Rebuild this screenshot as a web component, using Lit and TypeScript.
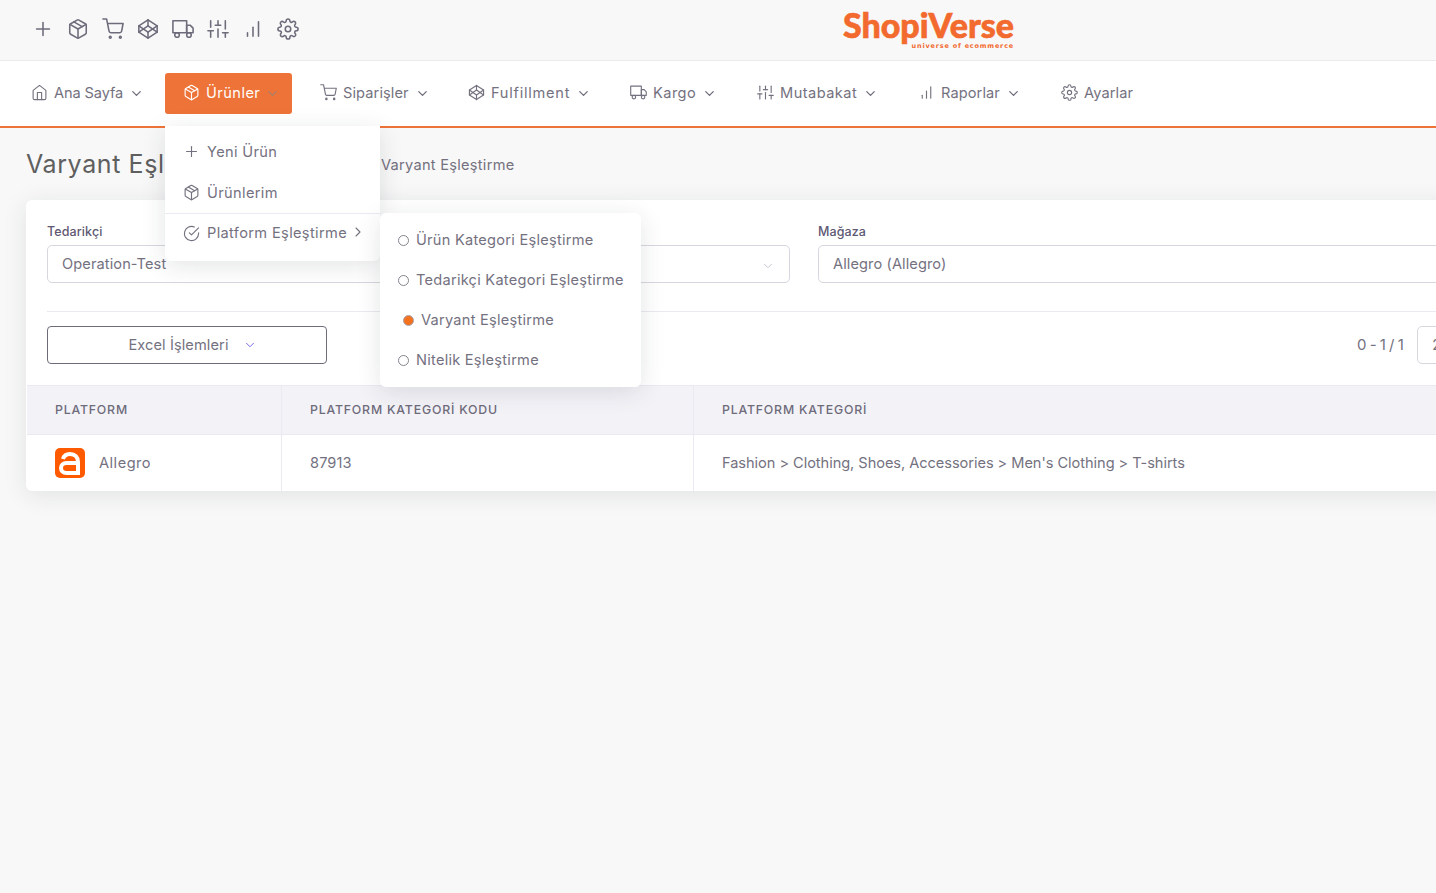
import { LitElement, html, css, svg } from "lit";
import { customElement } from "lit/decorators.js";

const P: Record<string, any> = {
  plus: svg`<line x1="12" y1="5" x2="12" y2="19"/><line x1="5" y1="12" x2="19" y2="12"/>`,
  box: svg`<line x1="16.5" y1="9.4" x2="7.5" y2="4.21"/><path d="M21 16V8a2 2 0 0 0-1-1.73l-7-4a2 2 0 0 0-2 0l-7 4A2 2 0 0 0 3 8v8a2 2 0 0 0 1 1.73l7 4a2 2 0 0 0 2 0l7-4A2 2 0 0 0 21 16z"/><polyline points="3.27 6.96 12 12.01 20.73 6.96"/><line x1="12" y1="22.08" x2="12" y2="12"/>`,
  cart: svg`<circle cx="9" cy="21" r="1"/><circle cx="20" cy="21" r="1"/><path d="M1 1h4l2.68 13.39a2 2 0 0 0 2 1.61h9.72a2 2 0 0 0 2-1.61L23 6H6"/>`,
  codepen: svg`<polygon points="12 2 22 8.5 22 15.5 12 22 2 15.5 2 8.5 12 2"/><line x1="12" y1="22" x2="12" y2="15.5"/><polyline points="22 8.5 12 15.5 2 8.5"/><polyline points="2 15.5 12 8.5 22 15.5"/><line x1="12" y1="2" x2="12" y2="8.5"/>`,
  truck: svg`<rect x="1" y="3" width="15" height="13"/><polygon points="16 8 20 8 23 11 23 16 16 16 16 8"/><circle cx="5.5" cy="18.5" r="2.5"/><circle cx="18.5" cy="18.5" r="2.5"/>`,
  sliders: svg`<line x1="4" y1="21" x2="4" y2="14"/><line x1="4" y1="10" x2="4" y2="3"/><line x1="12" y1="21" x2="12" y2="12"/><line x1="12" y1="8" x2="12" y2="3"/><line x1="20" y1="21" x2="20" y2="16"/><line x1="20" y1="12" x2="20" y2="3"/><line x1="1" y1="14" x2="7" y2="14"/><line x1="9" y1="8" x2="15" y2="8"/><line x1="17" y1="16" x2="23" y2="16"/>`,
  bars: svg`<line x1="12" y1="20" x2="12" y2="10"/><line x1="18" y1="20" x2="18" y2="4"/><line x1="6" y1="20" x2="6" y2="16"/>`,
  gear: svg`<circle cx="12" cy="12" r="3"/><path d="M19.4 15a1.65 1.65 0 0 0 .33 1.82l.06.06a2 2 0 0 1 0 2.83 2 2 0 0 1-2.83 0l-.06-.06a1.65 1.65 0 0 0-1.82-.33 1.65 1.65 0 0 0-1 1.51V21a2 2 0 0 1-2 2 2 2 0 0 1-2-2v-.09A1.65 1.65 0 0 0 9 19.4a1.65 1.65 0 0 0-1.82.33l-.06.06a2 2 0 0 1-2.83 0 2 2 0 0 1 0-2.83l.06-.06a1.65 1.65 0 0 0 .33-1.82 1.65 1.65 0 0 0-1.51-1H3a2 2 0 0 1-2-2 2 2 0 0 1 2-2h.09A1.65 1.65 0 0 0 4.6 9a1.65 1.65 0 0 0-.33-1.82l-.06-.06a2 2 0 0 1 0-2.83 2 2 0 0 1 2.83 0l.06.06a1.65 1.65 0 0 0 1.82.33H9a1.65 1.65 0 0 0 1-1.51V3a2 2 0 0 1 2-2 2 2 0 0 1 2 2v.09a1.65 1.65 0 0 0 1 1.51 1.65 1.65 0 0 0 1.82-.33l.06-.06a2 2 0 0 1 2.83 0 2 2 0 0 1 0 2.83l-.06.06a1.65 1.65 0 0 0-.33 1.82V9a1.65 1.65 0 0 0 1.51 1H21a2 2 0 0 1 2 2 2 2 0 0 1-2 2h-.09a1.65 1.65 0 0 0-1.51 1z"/>`,
  home: svg`<path d="M3 9l9-7 9 7v11a2 2 0 0 1-2 2H5a2 2 0 0 1-2-2z"/><polyline points="9 22 9 12 15 12 15 22"/>`,
  check: svg`<path d="M22 11.08V12a10 10 0 1 1-5.93-9.14"/><polyline points="22 4 12 14.01 9 11.01"/>`,
  down: svg`<polyline points="6 9 12 15 18 9"/>`,
  right: svg`<polyline points="9 18 15 12 9 6"/>`,
};

const icon = (n: string, cls = "") =>
  html`<svg class="ic ${cls}" viewBox="0 0 24 24" fill="none" stroke="currentColor" stroke-width="2" stroke-linecap="round" stroke-linejoin="round">${P[n]}</svg>`;

const NAV = [
  ["home", "Ana Sayfa", true, "tight"],
  ["box", "Ürünler", true, "active wide"],
  ["cart", "Siparişler", true, ""],
  ["codepen", "Fulfillment", true, "wider"],
  ["truck", "Kargo", true, "wide"],
  ["sliders", "Mutabakat", true, "wide"],
  ["bars", "Raporlar", true, ""],
  ["gear", "Ayarlar", false, ""],
] as const;

@customElement("app-root")
export class AppRoot extends LitElement {
  static styles = css`
    :host {
      display: block;
      position: relative;
      width: 100%;
      height: 893px;
      overflow: hidden;
      background: #f8f8f8;
      font-family: Inter, "Liberation Sans", sans-serif;
      font-size: 14px;
      letter-spacing: 0.1px;
      color: #74717f;
    }
    .ic { display: block; flex: none; }
    .top {
      height: 60px;
      display: grid;
      grid-template-columns: 810px auto;
      align-items: center;
      padding-left: 32px;
      border-bottom: 1px solid #ebebeb;
    }
    .quick { display: flex; gap: 13px; margin-top: -2px; color: #6e6b7b; }
    .quick .ic { width: 22px; height: 22px; stroke-width: 1.7; }
    .logo {
      width: 172px;
      margin-top: 0;
      text-align: right;
      color: #f26a2e;
      font-family: Lato, sans-serif;
      line-height: 1;
    }
    .logo b {
      display: block;
      font-size: 34px;
      font-weight: 900;
      letter-spacing: 0;
      line-height: 30px;
      -webkit-text-stroke: 0.6px #f26a2e;
      white-space: nowrap;
    }
    .logo span {
      display: block;
      font-family: "DejaVu Sans", sans-serif;
      font-size: 6.5px;
      font-weight: 700;
      letter-spacing: 0.8px;
      margin-top: 3px;
      white-space: nowrap;
    }
    nav {
      height: 65px;
      background: #fff;
      border-bottom: 2px solid #ee7338;
      display: grid;
      grid-template-columns: 134px 155px 148px 162px 127px 161px 143px auto;
      align-items: center;
      padding-left: 31px;
    }
    .item { display: flex; align-items: center; font-size: 14.6px; padding-bottom: 2px; }
    .item .ic { width: 17px; height: 17px; stroke-width: 1.6; margin-right: 6px; }
    .item .chev { width: 15px; height: 15px; margin: 1px 0 0 6px; stroke-width: 2; color: #6e6b7b; }
    .item.tight { letter-spacing: -0.1px; }
    .item.wide { letter-spacing: 0.45px; }
    .item.wider { letter-spacing: 0.75px; }
    .item.active {
      width: 127px;
      height: 41px;
      box-sizing: border-box;
      padding-left: 18px;
      background: #ee7338;
      color: #fff;
      border-radius: 3px;
    }
    .item.active .chev { color: #a5806d; margin-left: 5px; }
    .head {
      display: grid;
      grid-template-columns: 355px 1fr;
      align-items: center;
      height: 72px;
      padding-left: 26px;
    }
    h1 { margin: 0; font-size: 25px; font-weight: 400; color: #5f5f5f; white-space: nowrap; letter-spacing: 0.6px; }
    .crumb { font-size: 14.6px; letter-spacing: 0.27px; padding-top: 2px; }
    .card {
      margin-left: 26px;
      width: 1500px;
      height: 291px;
      background: #fff;
      border-radius: 6px;
      box-shadow: 0 4px 24px rgba(34, 41, 47, 0.1);
      box-sizing: border-box;
      padding-top: 24px;
      display: flex;
      flex-direction: column;
    }
    .filters {
      display: grid;
      grid-template-columns: 357.5px 357.5px 700px;
      gap: 28px;
      height: 87px;
      border-bottom: 1px solid #ebe9f1;
      margin: 0 0 0 21px;
    }
    label { display: block; height: 21px; line-height: 15px; font-size: 12.5px; font-weight: 500; color: #5e5873; }
    .inp {
      display: flex;
      align-items: center;
      justify-content: space-between;
      height: 38px;
      box-sizing: border-box;
      padding: 0 14px;
      border: 1px solid #d8d6de;
      border-radius: 5px;
      font-size: 14.6px;
    }
    .inp .ic { width: 14px; height: 14px; color: #c4c2cc; stroke-width: 1.6; margin: 3px 0 0 0; }
    .tools {
      display: flex;
      align-items: center;
      margin: 14px 0 0 21px;
      height: 38px;
    }
    .excel {
      display: flex;
      align-items: center;
      justify-content: center;
      gap: 14px;
      width: 280px;
      height: 38px;
      box-sizing: border-box;
      border: 1px solid #6e6b7b;
      border-radius: 4px;
      padding-left: 11px;
      font-size: 14.6px;
    }
    .excel .ic { width: 14px; height: 14px; color: #7367f0; stroke-width: 1.7; }
    .count { margin-left: 1030px; font-size: 15px; letter-spacing: 0.5px; word-spacing: -2px; white-space: nowrap; margin-top: -2px; }
    .size {
      margin-left: 13px;
      width: 60px;
      height: 38px;
      box-sizing: border-box;
      border: 1px solid #d8d6de;
      border-radius: 5px;
      padding: 9px 0 0 14px;
    }
    .table {
      margin: 21px 0 0 1px;
      display: grid;
      grid-template-columns: 254px 412px 1fr;
    }
    .th, .td { display: flex; align-items: center; padding-left: 28px; border-left: 1px solid #ebe9f1; }
    .th:nth-child(3n + 1), .td:nth-child(3n + 1) { border-left: 0; }
    .th {
      height: 48px;
      padding-bottom: 1px;
      box-sizing: border-box;
      height: 50px;
      background: #f3f2f7;
      border-top: 1px solid #ebe9f1;
      border-bottom: 1px solid #ebe9f1;
      font-size: 12.3px;
      font-weight: 500;
      letter-spacing: 0.82px;
      color: #6e6b7b;
    }
    .td { height: 56px; font-size: 14.6px; }
    .td.long { letter-spacing: -0.05px; }
    .td.name { letter-spacing: 0.5px; }
    .allegro { width: 30px; height: 30px; margin-right: 14px; display: block; }
    .menu {
      position: absolute;
      background: #fff;
      border-radius: 6px;
      box-shadow: 0 5px 25px rgba(34, 41, 47, 0.12);
      box-sizing: border-box;
      letter-spacing: 0.25px;
    }
    .m1 { left: 165px; top: 126px; width: 215px; height: 135px; border-radius: 0 0 6px 6px; padding-top: 5px; letter-spacing: 0.35px; }
    .m1 div.row { display: flex; align-items: center; height: 41px; padding-left: 18px; font-size: 14.6px; }
    .m1 .ic { width: 17px; height: 17px; stroke-width: 1.6; margin-right: 7px; }
    .m1 .sep { border-top: 1px solid #ebe9f1; box-sizing: border-box; padding-bottom: 2px; }
    .m1 .row .arrow { width: 16px; height: 16px; margin: -2px 0 0 3px; }
    .m2 { left: 380px; top: 213px; width: 261px; height: 174px; padding-top: 7px; }
    .m2 div.row { display: flex; align-items: center; height: 40px; padding-left: 18px; font-size: 14.6px; }
    .dot { width: 11px; height: 11px; box-sizing: border-box; border: 1.5px solid #85838f; border-radius: 50%; margin-right: 7px; flex: none; }
    .m2 div.on { padding-left: 23px; }
    .on .dot { background: #f4711e; border-color: #a9a7b2; }
  `;

  render() {
    return html`
      <div class="top">
        <div class="quick">
          ${["plus", "box", "cart", "codepen", "truck", "sliders", "bars", "gear"].map((n) => icon(n))}
        </div>
        <div class="logo"><b>ShopiVerse</b><span>universe of ecommerce</span></div>
      </div>
      <nav>
        ${NAV.map(
          ([i, t, c, k]) => html`<div class="item ${k}">
            ${icon(i)}<span>${t}</span>${c ? icon("down", "chev") : ""}
          </div>`
        )}
      </nav>
      <div class="head"><h1>Varyant Eşleştirme</h1><div class="crumb">Varyant Eşleştirme</div></div>
      <div class="card">
        <div class="filters">
          <div><label>Tedarikçi</label><div class="inp">Operation-Test</div></div>
          <div><label>Platform</label><div class="inp"><span>Allegro</span>${icon("down")}</div></div>
          <div><label>Mağaza</label><div class="inp">Allegro (Allegro)</div></div>
        </div>
        <div class="tools">
          <div class="excel">Excel İşlemleri ${icon("down")}</div>
          <div class="count">0 - 1 / 1</div>
          <div class="size">25</div>
        </div>
        <div class="table">
          <div class="th">PLATFORM</div>
          <div class="th">PLATFORM KATEGORİ KODU</div>
          <div class="th">PLATFORM KATEGORİ</div>
          <div class="td name">
            <svg class="allegro" viewBox="0 0 30 30">
              <rect width="30" height="30" rx="5" fill="#ff5a00" />
              <path d="M8 11C9 7.5 12 6 15 6c5 0 8 3 8 8v11H11.5C8 25 6 23 6 20s2-5 5.5-5H23" fill="none" stroke="#fff" stroke-width="4" />
            </svg>
            Allegro
          </div>
          <div class="td">87913</div>
          <div class="td long">Fashion &gt; Clothing, Shoes, Accessories &gt; Men's Clothing &gt; T-shirts</div>
        </div>
      </div>
      <div class="menu m1">
        <div class="row">${icon("plus")}Yeni Ürün</div>
        <div class="row">${icon("box")}Ürünlerim</div>
        <div class="row sep">${icon("check")}Platform Eşleştirme${icon("right", "arrow")}</div>
      </div>
      <div class="menu m2">
        <div class="row"><i class="dot"></i>Ürün Kategori Eşleştirme</div>
        <div class="row"><i class="dot"></i>Tedarikçi Kategori Eşleştirme</div>
        <div class="row on"><i class="dot"></i>Varyant Eşleştirme</div>
        <div class="row"><i class="dot"></i>Nitelik Eşleştirme</div>
      </div>
    `;
  }
}
